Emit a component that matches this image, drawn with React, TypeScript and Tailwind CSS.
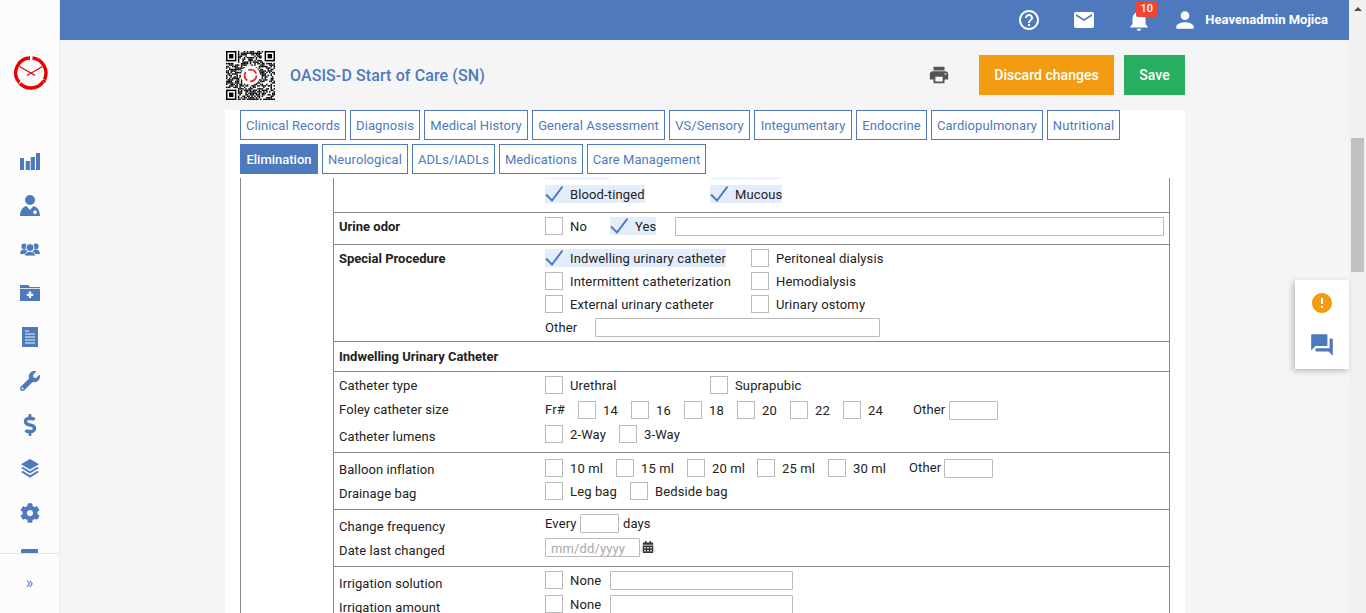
import React from "react";
import { MdHelpOutline, MdEmail, MdNotifications, MdPerson, MdPrint, MdError, MdQuestionAnswer } from "react-icons/md";
import { FaWrench, FaDollarSign, FaCog, FaCalendarAlt } from "react-icons/fa";

const qr = (() => {
  const n = 33;
  const cells: [number, number][] = [];
  let s = 12345;
  const inFinder = (x: number, y: number) => (x < 8 && y < 8) || (x > n - 9 && y < 8) || (x < 8 && y > n - 9);
  for (let y = 0; y < n; y++) {
    for (let x = 0; x < n; x++) {
      s = (s * 1103515245 + 12345) & 0x7fffffff;
      if (inFinder(x, y)) continue;
      if ((s >> 12) % 100 < 58) cells.push([x, y]);
    }
  }
  return cells;
})();

function Finder({ x, y }: { x: number; y: number }) {
  return (
    <g>
      <rect x={x} y={y} width={7} height={7} fill="#000" />
      <rect x={x + 1} y={y + 1} width={5} height={5} fill="#fff" />
      <rect x={x + 2} y={y + 2} width={3} height={3} fill="#000" />
    </g>
  );
}

function QrCode() {
  return (
    <svg viewBox="0 0 33 33" className="w-[49px] h-[49px] shrink-0 bg-white">
      {qr.map(([x, y], i) => (
        <rect key={i} x={x} y={y} width={1} height={1} fill="#000" />
      ))}
      <Finder x={0} y={0} />
      <Finder x={26} y={0} />
      <Finder x={0} y={26} />
      <circle cx={16.5} cy={16.5} r={6.5} fill="#fff" />
      <circle cx={16.5} cy={16.5} r={4} fill="none" stroke="#ee1c25" strokeWidth={1.2} strokeDasharray="6.4 2" />
    </svg>
  );
}

function Logo() {
  return (
    <svg viewBox="0 0 36 36" className="w-[36px] h-[36px]">
      <g fill="none" stroke="#e60000" strokeWidth="3.4">
        <path d="M15.5 3 A 15.2 15.2 0 0 0 4.6 25.5" />
        <path d="M7 28.5 A 15.2 15.2 0 0 0 30 27" />
        <path d="M31.5 24.5 A 15.2 15.2 0 0 0 19.5 3" />
      </g>
      <path d="M17 0.5 L14 3.5 L17 5.5 Z M2.5 25 L7.5 24.5 L6 29.5 Z M32.5 28 L28 26 L33 23.5 Z" fill="#e60000" />
      <path d="M6.5 11.5 L22 20.5 M29.5 11.5 L14 20.5" stroke="#e60000" strokeWidth="1.2" />
    </svg>
  );
}

function BarsIcon() {
  return (
    <svg viewBox="0 0 20 17" className="w-[20px] h-[17px]" fill="#4e7abd">
      <rect x="0" y="5" width="4" height="12" />
      <rect x="5.7" y="8" width="4.2" height="9" />
      <rect x="10.7" y="4" width="4.2" height="13" />
      <rect x="16" y="0" width="4" height="17" />
    </svg>
  );
}

function DoctorIcon() {
  return (
    <svg viewBox="0 0 20 21" className="w-[20px] h-[21px]">
      <circle cx="10" cy="5" r="5" fill="#4e7abd" />
      <path d="M0 21 C0 15 3 11.8 6.5 11 L10 15 L13.5 11 C17 11.8 20 15 20 21 Z" fill="#4e7abd" />
      <path d="M15 15.2 V19.2 M13 17.2 H17" stroke="#fff" strokeWidth="1.6" />
    </svg>
  );
}

function UsersIcon() {
  return (
    <svg viewBox="0 0 20 13" className="w-[20px] h-[13px]" fill="#4e7abd">
      <circle cx="4.2" cy="3.4" r="2.8" />
      <circle cx="15.8" cy="3.4" r="2.8" />
      <path d="M0 11 C0 7.8 1.8 6.4 4.2 6.4 C6.6 6.4 8 7.8 8 11 Z M12 11 C12 7.8 13.4 6.4 15.8 6.4 C18.2 6.4 20 7.8 20 11 Z" />
      <circle cx="10" cy="4.6" r="4" stroke="#fff" strokeWidth="1" />
      <path d="M4.5 13 C4.5 10 7 8.4 10 8.4 C13 8.4 15.5 10 15.5 13 Z" stroke="#fff" strokeWidth="0.8" />
    </svg>
  );
}

function FolderIcon() {
  return (
    <svg viewBox="0 0 20 16" className="w-[20px] h-[16px]">
      <path d="M0 0 H8 L10 2 H20 V3 H0 Z" fill="#4e7abd" />
      <path d="M0 3.8 H20 V16 H0 Z" fill="#4e7abd" />
      <path d="M10 6.5 V13 M6.8 9.8 H13.2" stroke="#fff" strokeWidth="2.2" />
    </svg>
  );
}

function DocIcon() {
  return (
    <svg viewBox="0 0 16 20" className="w-[16px] h-[20px]">
      <rect width="16" height="20" fill="#4e7abd" />
      <path d="M3 4 H7 M3 7 H13 M3 10 H13 M3 13 H13 M3 16 H13" stroke="#fff" strokeWidth="1" opacity="0.9" />
    </svg>
  );
}

function LayersIcon() {
  return (
    <svg viewBox="0 0 18 20" className="w-[18px] h-[20px]" fill="#4e7abd">
      <path d="M9 0 L18 5.2 L9 10.4 L0 5.2 Z" />
      <path d="M0 9 L2 8 L9 12.2 L16 8 L18 9 L9 14.4 Z" />
      <path d="M0 13 L2 12 L9 16.2 L16 12 L18 13 L9 18.8 Z" />
    </svg>
  );
}

function NavSlot({ children }: { children: React.ReactNode }) {
  return <div className="h-[44px] shrink-0 flex items-center justify-center text-[#4e7abd]">{children}</div>;
}

function Sidebar() {
  return (
    <aside className="w-[60px] shrink-0 h-full bg-[#fcfcfc] border-r border-[#eeeeee] flex flex-col">
      <div className="h-[554px] shrink-0 overflow-hidden flex flex-col border-b border-[#e6e6e6]">
        <div className="h-[139px] shrink-0 flex justify-center pt-[55px] pl-[3px]">
          <Logo />
        </div>
        <NavSlot><BarsIcon /></NavSlot>
        <NavSlot><DoctorIcon /></NavSlot>
        <NavSlot><UsersIcon /></NavSlot>
        <NavSlot><FolderIcon /></NavSlot>
        <NavSlot><DocIcon /></NavSlot>
        <NavSlot><FaWrench size={20} /></NavSlot>
        <NavSlot><FaDollarSign size={22} /></NavSlot>
        <NavSlot><LayersIcon /></NavSlot>
        <NavSlot><FaCog size={20} /></NavSlot>
        <NavSlot><div className="w-[17px] h-[16px] bg-[#4e7abd] rounded-[1px]" /></NavSlot>
      </div>
      <div className="flex-1 flex items-center justify-center text-[#5a7fd0] text-[16px] leading-none pb-[2px]">»</div>
    </aside>
  );
}

function Header() {
  return (
    <header className="h-[40px] shrink-0 bg-[#4e7abd] flex items-center justify-end pr-[21px] text-white">
      <MdHelpOutline size={24} className="mr-[31px]" />
      <MdEmail size={24} className="mr-[30px]" />
      <div className="relative mr-[20px] flex">
        <MdNotifications size={26} />
        <span className="absolute left-[10px] top-[-6px] w-[21px] h-[16px] bg-[#f44336] rounded-[2px] text-[11px] leading-[16px] text-center font-medium">10</span>
      </div>
      <MdPerson size={26} className="mr-[7px]" />
      <span className="text-[13px] font-bold">Heavenadmin Mojica</span>
    </header>
  );
}

const tabs1 = [
  { label: "Clinical Records", w: "w-[106px]" },
  { label: "Diagnosis", w: "w-[70px]" },
  { label: "Medical History", w: "w-[104px]" },
  { label: "General Assessment", w: "w-[133px]" },
  { label: "VS/Sensory", w: "w-[81px]" },
  { label: "Integumentary", w: "w-[98px]" },
  { label: "Endocrine", w: "w-[71px]" },
  { label: "Cardiopulmonary", w: "w-[112px]" },
  { label: "Nutritional", w: "w-[73px]" },
];
const tabs2 = [
  { label: "Elimination", w: "w-[78px]" },
  { label: "Neurological", w: "w-[86px]" },
  { label: "ADLs/IADLs", w: "w-[83px]" },
  { label: "Medications", w: "w-[84px]" },
  { label: "Care Management", w: "w-[119px]" },
];

function Tab({ label, w }: { label: string; w: string }) {
  const active = label === "Elimination";
  return (
    <div className={`${w} h-[30px] pt-[2px] flex items-center justify-center border border-[#4e7abd] text-[13px] ${active ? "bg-[#4e7abd] text-white font-medium" : "bg-white text-[#4e7abd] tracking-[0.07px]"}`}>
      {label}
    </div>
  );
}

function Txt({ width, className, children }: { width?: string; className?: string; children: React.ReactNode }) {
  return <span className={`${width ?? ""} pt-[2px] shrink-0 ${className ?? ""}`}>{children}</span>;
}

function Check({ label, on, width }: { label: string; on?: boolean; width?: string }) {
  return (
    <div className={`${width ?? ""} shrink-0 flex`}>
      <div className={on ? "h-[18px] flex items-center gap-[7px] bg-[#e4edfb]" : "h-[18px] flex items-center gap-[7px]"}>
        {on ? (
          <svg viewBox="0 0 18 18" className="w-[18px] h-[18px]">
            <path d="M1 9.5 L7 15.5 L17.5 1.5" fill="none" stroke="#4e7abd" strokeWidth="2" />
          </svg>
        ) : (
          <div className="w-[18px] h-[18px] border border-[#bbbbbb] bg-white" />
        )}
        <Txt className="text-[#222]">{label}</Txt>
      </div>
    </div>
  );
}

function TextBox({ width, className }: { width: string; className?: string }) {
  return <div className={`${width} h-[19px] border border-[#bbbbbb] rounded-[1px] bg-white shrink-0 ${className ?? ""}`} />;
}

function Line({ label, labelPad, bold, className, children }: { label?: string; labelPad?: string; bold?: boolean; className?: string; children?: React.ReactNode }) {
  return (
    <div className={`flex ${className ?? ""}`}>
      <div className={`w-[211px] h-[18px] shrink-0 pl-[5px] leading-[18px] text-[13px] text-[#222] ${bold ? "font-bold" : "tracking-[0.1px]"} ${labelPad ?? "pt-[1px]"}`}>{label}</div>
      <div className="flex-1 flex items-center text-[13px] tracking-[0.13px] text-[#222] h-[18px]">{children}</div>
    </div>
  );
}

function Section({ height, children, last }: { height: string; children: React.ReactNode; last?: boolean }) {
  return <div className={`${height} ${last ? "" : "border-b border-[#888888]"} shrink-0`}>{children}</div>;
}

function FormTable() {
  return (
    <div className="ml-[15px] w-[930px] mt-[4px] flex border-l border-[#888888]">
      <div className="w-[92px] shrink-0" />
      <div className="w-[837px] border-l border-r border-[#888888]">
        <Section height="h-[35px]">
          <div className="flex pl-[211px]">
            <div className="w-[165px]"><div className="w-[65px] h-[1px] bg-[#e4edfb]" /></div>
            <div className="w-[71px] h-[1px] bg-[#e4edfb]" />
          </div>
          <Line className="mt-[6px]">
            <Check label="Blood-tinged" on width="w-[165px]" />
            <Check label="Mucous" on />
          </Line>
        </Section>
        <Section height="h-[32px]">
          <Line label="Urine odor" bold className="pt-[4px]">
            <Check label="No" width="w-[65px]" />
            <Check label="Yes" on width="w-[65px]" />
            <TextBox width="w-[489px]" />
          </Line>
        </Section>
        <Section height="h-[97px]">
          <Line label="Special Procedure" bold className="pt-[4px]">
            <Check label="Indwelling urinary catheter" on width="w-[206px]" />
            <Check label="Peritoneal dialysis" />
          </Line>
          <Line className="mt-[5px]">
            <Check label="Intermittent catheterization" width="w-[206px]" />
            <Check label="Hemodialysis" />
          </Line>
          <Line className="mt-[5px]">
            <Check label="External urinary catheter" width="w-[206px]" />
            <Check label="Urinary ostomy" />
          </Line>
          <Line className="mt-[5px]">
            <Txt width="w-[50px]">Other</Txt>
            <TextBox width="w-[285px]" />
          </Line>
        </Section>
        <Section height="h-[30px]">
          <Line label="Indwelling Urinary Catheter" bold className="pt-[5px]" />
        </Section>
        <Section height="h-[81px]">
          <Line label="Catheter type" className="pt-[4px]">
            <Check label="Urethral" width="w-[165px]" />
            <Check label="Suprapubic" />
          </Line>
          <Line label="Foley catheter size" labelPad="pt-0" className="mt-[7px]">
            <span className="w-[33px] shrink-0">Fr#</span>
            <Check label="14" width="w-[53px]" />
            <Check label="16" width="w-[53px]" />
            <Check label="18" width="w-[53px]" />
            <Check label="20" width="w-[53px]" />
            <Check label="22" width="w-[53px]" />
            <Check label="24" width="w-[70px]" />
            <span className="w-[36px] shrink-0">Other</span>
            <TextBox width="w-[49px]" />
          </Line>
          <Line label="Catheter lumens" labelPad="pt-[3px]" className="mt-[6px]">
            <Check label="2-Way" width="w-[74px]" />
            <Check label="3-Way" />
          </Line>
        </Section>
        <Section height="h-[57px]">
          <Line label="Balloon inflation" labelPad="pt-[2px]" className="pt-[6px]">
            <Check label="10 ml" width="w-[71px]" />
            <Check label="15 ml" width="w-[71px]" />
            <Check label="20 ml" width="w-[70px]" />
            <Check label="25 ml" width="w-[71px]" />
            <Check label="30 ml" width="w-[81px]" />
            <span className="w-[35px] shrink-0">Other</span>
            <TextBox width="w-[49px]" />
          </Line>
          <Line label="Drainage bag" labelPad="pt-[3px]" className="mt-[5px]">
            <Check label="Leg bag" width="w-[85px]" />
            <Check label="Bedside bag" />
          </Line>
        </Section>
        <Section height="h-[57px]">
          <Line label="Change frequency" labelPad="pt-[4px]" className="pt-[4px]">
            <Txt width="w-[35px]">Every</Txt>
            <TextBox width="w-[39px]" />
            <Txt className="ml-[4px]">days</Txt>
          </Line>
          <Line label="Date last changed" labelPad="pt-[4px]" className="mt-[6px]">
            <div className="w-[95px] h-[19px] border border-[#bbbbbb] rounded-[1px] px-[5px] text-[#aaaaaa] text-[13px] leading-[19px]">mm/dd/yyyy</div>
            <FaCalendarAlt size={12} className="ml-[2px] text-[#333]" />
          </Line>
        </Section>
        <Section height="h-[60px]" last>
          <Line label="Irrigation solution" labelPad="pt-[4px]" className="pt-[4px]">
            <Check label="None" width="w-[65px]" />
            <TextBox width="w-[183px]" />
          </Line>
          <Line label="Irrigation amount" labelPad="pt-[4px]" className="mt-[6px]">
            <Check label="None" width="w-[65px]" />
            <TextBox width="w-[183px]" />
          </Line>
        </Section>
      </div>
    </div>
  );
}

function Scrollbar() {
  return (
    <div className="w-[17px] shrink-0 h-full bg-[#f1f1f1] flex flex-col items-center">
      <div className="w-0 h-0 mt-[7px] border-l-[4px] border-r-[4px] border-b-[4px] border-l-transparent border-r-transparent border-b-[#505050]" />
      <div className="w-[13px] h-[134px] mt-[127px] bg-[#c1c1c1]" />
    </div>
  );
}

export default function App() {
  return (
    <div className="relative w-[1366px] h-[613px] flex overflow-hidden bg-[#f5f5f5]" style={{ fontFamily: "Roboto, 'Liberation Sans', sans-serif" }}>
      <Sidebar />
      <main className="flex-1 h-full flex flex-col min-w-0">
        <Header />
        <div className="w-[960px] ml-[165px] flex-1 flex flex-col overflow-hidden">
          <div className="h-[70px] shrink-0 flex items-center pl-[1px]">
            <QrCode />
            <h1 className="ml-[15px] pt-[2px] text-[16px] font-medium text-[#4e7abd] tracking-[0.1px]">OASIS-D Start of Care (SN)</h1>
            <MdPrint size={22} className="ml-auto mr-[29px] text-[#555555]" />
            <button className="w-[135px] h-[40px] bg-[#f39c12] text-white text-[14px] font-medium tracking-[0.03px]">Discard changes</button>
            <button className="w-[61px] h-[40px] ml-[10px] bg-[#27ae60] text-white text-[14px] font-medium">Save</button>
          </div>
          <div className="flex-1 bg-white overflow-hidden">
            <div className="pl-[15px] flex gap-[4px]">{tabs1.map((t) => <Tab key={t.label} label={t.label} w={t.w} />)}</div>
            <div className="pl-[15px] mt-[4px] flex gap-[4px]">{tabs2.map((t) => <Tab key={t.label} label={t.label} w={t.w} />)}</div>
            <FormTable />
          </div>
        </div>
      </main>
      <Scrollbar />
      <div className="absolute left-[1295px] top-[280px] w-[54px] h-[89px] bg-white shadow-[-2px_2px_6px_rgba(0,0,0,0.25)] flex flex-col items-center pt-[11px] gap-[17px]">
        <MdError size={24} className="text-[#f39c12]" />
        <MdQuestionAnswer size={26} className="text-[#4e7abd]" />
      </div>
    </div>
  );
}
